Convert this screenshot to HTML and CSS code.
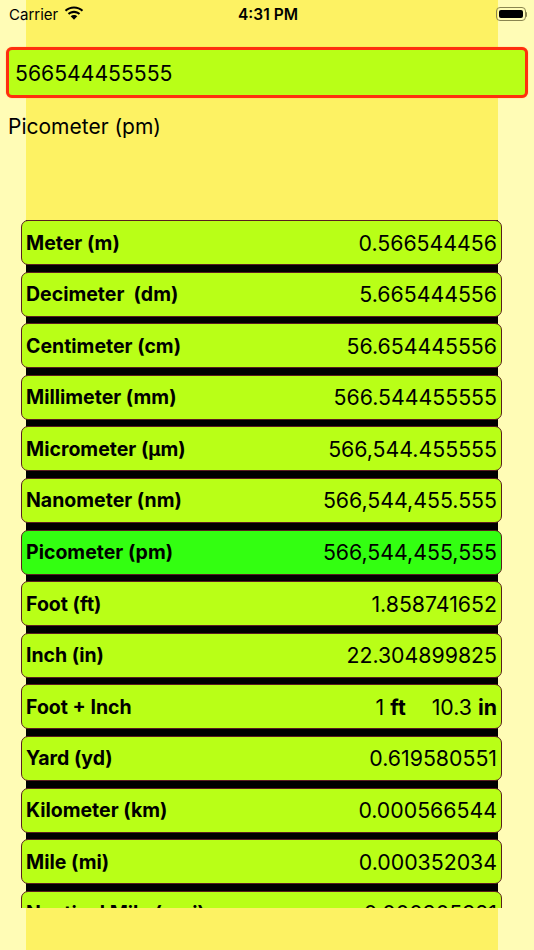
FILE: index.html
```html
<!DOCTYPE html>
<html lang="en">
<head>
<meta charset="utf-8">
<title>Length converter</title>
<link rel="stylesheet" href="styles.css">
</head>
<body>
<div class="panel">
  <header class="status">
    <div class="status-left">
      <span class="carrier">Carrier</span>
      <svg class="wifi" viewBox="0 0 20 15" aria-hidden="true"><path d="M10 2.6c3 0 5.7 1.1 7.8 3l1.4-1.500C16.700 1.700 13.500.4 10 .4S3.300 1.700.8 4.100l1.400 1.500c2.100-1.900 4.800-3 7.800-3z"/><path d="M10 6.900c1.800 0 3.500.7 4.800 1.800l1.400-1.500C14.500 5.700 12.400 4.800 10 4.800s-4.500.9-6.200 2.400l1.400 1.500C6.500 7.600 8.200 6.900 10 6.900z"/><path d="M10 9.100c-1.300 0-2.400.5-3.300 1.200l3.300 3.500 3.300-3.500c-.9-.7-2-1.200-3.300-1.200z"/></svg>
    </div>
    <span class="time">4:31 PM</span>
    <div class="battery"><span class="battery-body"><span class="battery-fill"></span></span><span class="battery-cap"></span></div>
  </header>
  <div class="field">566544455555</div>
  <div class="unit-label">Picometer (pm)</div>
  <div class="list">
    <div class="rows">
      <div class="row"><b>Meter (m)</b><span>0.566544456</span></div>
      <div class="row"><b>Decimeter&nbsp; (dm)</b><span>5.665444556</span></div>
      <div class="row"><b>Centimeter (cm)</b><span>56.654445556</span></div>
      <div class="row"><b>Millimeter (mm)</b><span>566.544455555</span></div>
      <div class="row"><b>Micrometer (µm)</b><span>566,544.455555</span></div>
      <div class="row"><b>Nanometer (nm)</b><span>566,544,455.555</span></div>
      <div class="row active"><b>Picometer (pm)</b><span>566,544,455,555</span></div>
      <div class="row"><b>Foot (ft)</b><span>1.858741652</span></div>
      <div class="row"><b>Inch (in)</b><span>22.304899825</span></div>
      <div class="row"><b>Foot + Inch</b><span class="compound"><span>1 <b>ft</b></span><span>10.3 <b>in</b></span></span></div>
      <div class="row"><b>Yard (yd)</b><span>0.619580551</span></div>
      <div class="row"><b>Kilometer (km)</b><span>0.000566544</span></div>
      <div class="row"><b>Mile (mi)</b><span>0.000352034</span></div>
      <div class="row"><b>Nautical Mile (nmi)</b><span>0.000305921</span></div>
    </div>
  </div>
</div>
</body>
</html>
```
FILE: styles.css
```css
* { box-sizing: border-box; }
html, body { margin: 0; padding: 0; }
body {
  width: 534px;
  height: 950px;
  overflow: hidden;
  background: #fffcb6;
  color: #000;
  font-family: Inter, "Liberation Sans", sans-serif;
}
.panel {
  width: 472px;
  height: 950px;
  margin-left: 26px;
  background: #fdf263;
  display: flex;
  flex-direction: column;
}
.status {
  height: 28px;
  margin: 0 -36px 0 -26px;
  padding: 0 7px 0 9px;
  display: grid;
  grid-template-columns: 1fr auto 1fr;
  align-items: center;
}
.status-left { display: flex; align-items: center; gap: 6px; }
.carrier { font-weight: 400; font-size: 15px; }
.wifi { width: 20px; height: 15px; margin-top: -1px; }
.time { font-weight: 600; font-size: 15.500px; }
.battery { justify-self: end; display: flex; align-items: center; }
.battery-body {
  width: 30px;
  height: 14px;
  padding: 2px;
  border: 1px solid #8a8550;
  border-radius: 4px;
  display: block;
}
.battery-fill { display: block; height: 100%; background: #000; border-radius: 2px; }
.battery-cap { width: 1px; height: 5px; background: #8a8550; border-radius: 0 2px 2px 0; }
.field {
  height: 51px;
  margin: 19px -30px 0 -20px;
  padding-left: 6px;
  border: 3px solid #ff2f0e;
  border-radius: 6px;
  background: #b9ff17;
  box-shadow: 0 0 1px #ff8a40;
  display: flex;
  align-items: center;
  font-size: 21.200px;
}
.unit-label {
  height: 122px;
  margin: 0 -18px;
  padding-top: 15px;
  font-size: 21px;
  line-height: 28px;
}
.list {
  height: 688px;
  margin: 0 -4px 0 -5px;
  overflow: hidden;
}
.rows {
  margin: 0 4px 0 5px;
  background: #000;
  display: flex;
  flex-direction: column;
  gap: 6.600px;
}
.row {
  flex: none;
  height: 45px;
  margin: 0 -4px 0 -5px;
  padding: 0 4px;
  border: 1px solid #5a1f1f;
  border-radius: 7px;
  background: #b9ff17;
  display: flex;
  align-items: center;
  justify-content: space-between;
  font-size: 21.300px;
}
.row > b { font-size: 19.500px; font-weight: 700; }
.row.active { background: #33ff11; }
.compound { display: flex; gap: 26px; }
```
